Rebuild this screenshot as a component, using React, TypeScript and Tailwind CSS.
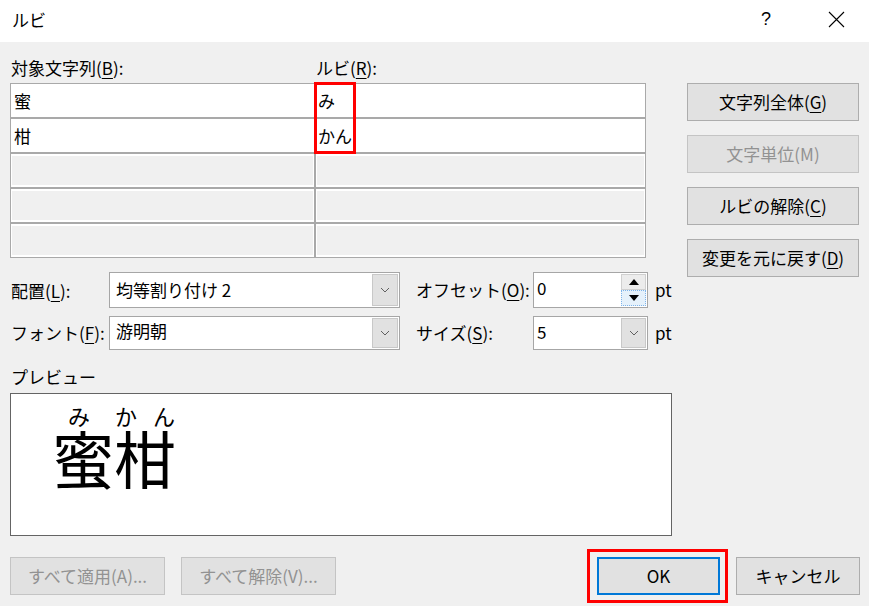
import type { ReactNode } from "react";

const font = "font-['Noto_Sans_CJK_JP','Noto_Sans',sans-serif]";

function U({ children }: { children: ReactNode }) {
  return <span className="underline underline-offset-[3px] decoration-1">{children}</span>;
}

function WinButton({ children, disabled, className = "" }: { children: ReactNode; disabled?: boolean; className?: string }) {
  return (
    <div
      className={`h-[38px] flex items-center justify-center border bg-[#e1e1e1] leading-[20px] ${
        disabled ? "border-[#c4c4c4] text-[#929292]" : "border-[#adadad] text-black"
      } ${className}`}
    >
      {children}
    </div>
  );
}

function Chevron() {
  return (
    <svg width="10" height="6" viewBox="0 0 10 6" className="text-[#606060]">
      <path d="M1 1 L5 5 L9 1" fill="none" stroke="currentColor" strokeWidth="1" />
    </svg>
  );
}

function Combo({ value, className = "", textClass = "" }: { value: string; className?: string; textClass?: string }) {
  return (
    <div className={`flex items-stretch bg-white border border-[#a6a6a6] p-px ${className}`}>
      <div className={`flex-1 pl-[5px] leading-[20px] ${textClass}`}>{value}</div>
      <div className="w-[26px] bg-[#e1e1e1] border border-[#c8c8c8] flex items-center justify-center">
        <Chevron />
      </div>
    </div>
  );
}

function Row({ base, ruby, filled, first }: { base?: string; ruby?: string; filled?: boolean; first?: boolean }) {
  const cell = filled
    ? "bg-white"
    : "bg-[#f0f0f0] shadow-[inset_0_2px_0_#fff,inset_0_-2px_0_#fff,inset_1px_0_0_#fff,inset_-1px_0_0_#fff]";
  return (
    <div className={`flex ${first ? "h-[33px]" : "h-[35px] border-t-2 border-[#a9a9a9]"}`}>
      <div className={`w-[305px] border-r-2 border-[#a9a9a9] pl-[3px] flex items-center leading-[20px] ${cell}`}>{base}</div>
      <div className={`flex-1 pl-[2px] flex items-center leading-[20px] ${cell}`}>{ruby}</div>
    </div>
  );
}

export default function App() {
  return (
    <div className={`w-[869px] h-[606px] overflow-hidden bg-[#f0f0f0] text-[17px] text-black ${font}`}>
      {/* title bar */}
      <div className="h-[42px] bg-white flex items-center pl-[12px]">
        <span className="leading-[20px] -mt-[3px]">ルビ</span>
        <span className="ml-auto mr-[57px] -mt-[4px] font-['Liberation_Sans',sans-serif] text-[18px] leading-[20px]">?</span>
        <svg width="17" height="17" viewBox="0 0 17 17" className="mr-[24px] -mt-[3px]">
          <path d="M1 1 L16 16 M16 1 L1 16" stroke="#000" strokeWidth="1.1" fill="none" />
        </svg>
      </div>

      <div className="flex pl-[10px] pt-[16px]">
        {/* left block */}
        <div className="w-[662px]">
          <div className="flex h-[20px] mb-[5px] leading-[20px]">
            <div className="w-[305px] pl-px">
              対象文字列(<U>B</U>):
            </div>
            <div className="pl-px">
              ルビ(<U>R</U>):
            </div>
          </div>

          <div className="relative w-[636px] border border-[#a9a9a9]">
            <Row base="蜜" ruby="み" filled first />
            <Row base="柑" ruby="かん" filled />
            <Row />
            <Row />
            <Row />
            <div className="absolute left-[303px] -top-[2px] w-[42px] h-[72px] border-[3px] border-[#ff0000]" />
          </div>

          <div className="flex items-center mt-[14px] h-[36px]">
            <div className="w-[99px] pl-px leading-[20px] mt-[2px]">
              配置(<U>L</U>):
            </div>
            <Combo value="均等割り付け 2" className="w-[291px] h-[36px]" textClass="pt-[6px]" />
            <div className="ml-[16px] w-[117px] leading-[20px]">
              オフセット(<U>O</U>):
            </div>
            <div className="w-[115px] h-[36px] flex items-stretch bg-white border border-[#a6a6a6] p-px">
              <div className="flex-1 pl-[2px] pt-[4px] leading-[20px]">0</div>
              <div className="w-[25px] flex flex-col">
                <div className="flex-1 bg-[#ececec] border border-[#d0d0d0] flex items-center justify-center">
                  <svg width="10" height="6" viewBox="0 0 10 6">
                    <path d="M0 6 L5 0 L10 6 Z" fill="#000" />
                  </svg>
                </div>
                <div className="flex-1 bg-[#e5f1fb] border border-dotted border-[#7eb4ea] flex items-center justify-center">
                  <svg width="10" height="6" viewBox="0 0 10 6">
                    <path d="M0 0 L10 0 L5 6 Z" fill="#000" />
                  </svg>
                </div>
              </div>
            </div>
            <div className="ml-[7px] leading-[20px]">pt</div>
          </div>

          <div className="flex items-center mt-[8px] h-[34px]">
            <div className="w-[99px] pl-px leading-[20px]">
              フォント(<U>F</U>):
            </div>
            <Combo value="游明朝" className="w-[291px] h-[34px]" textClass="pt-[3px]" />
            <div className="ml-[16px] w-[117px] leading-[20px]">
              サイズ(<U>S</U>):
            </div>
            <div className="w-[115px] h-[34px] flex items-stretch bg-white border border-[#a6a6a6] p-px">
              <div className="flex-1 pl-[2px] pt-[4px] leading-[20px]">5</div>
              <div className="w-[25px] bg-[#e1e1e1] border border-[#c8c8c8] flex items-center justify-center">
                <Chevron />
              </div>
            </div>
            <div className="ml-[7px] leading-[20px]">pt</div>
          </div>

          <div className="mt-[17px] h-[20px] leading-[20px] pl-px">プレビュー</div>

          <div className="mt-[6px] h-[143px] bg-white border border-[#646464] pl-[41px] pt-[10px]">
            <div className="flex">
              <div className="w-[62px] flex flex-col">
                <div className="h-[22px] text-[22px] leading-none flex justify-center pr-[8px]">み</div>
                <div className="text-[62px] leading-none">蜜</div>
              </div>
              <div className="w-[62px] flex flex-col">
                <div className="h-[22px] text-[22px] leading-none flex justify-between px-[1px]">
                  <span>か</span>
                  <span>ん</span>
                </div>
                <div className="text-[62px] leading-none">柑</div>
              </div>
            </div>
          </div>
        </div>

        {/* right buttons */}
        <div className="ml-[15px] w-[172px] pt-[25px] flex flex-col gap-[14px]">
          <WinButton>
            文字列全体(<U>G</U>)
          </WinButton>
          <WinButton disabled>文字単位(M)</WinButton>
          <WinButton>
            ルビの解除(<U>C</U>)
          </WinButton>
          <WinButton>
            変更を元に戻す(<U>D</U>)
          </WinButton>
        </div>
      </div>

      {/* bottom buttons */}
      <div className="flex items-center mt-[21px] pl-[10px] pr-[9px]">
        <WinButton disabled className="w-[155px]">
          すべて適用(A)...
        </WinButton>
        <WinButton disabled className="w-[155px] ml-[16px]">
          すべて解除(V)...
        </WinButton>
        <div className="relative ml-auto">
          <div className="w-[123px] h-[38px] flex items-center justify-center bg-[#e1e1e1] border-2 border-[#0078d7] leading-[20px]">
            OK
          </div>
          <div className="absolute -left-[10px] -top-[8px] w-[141px] h-[54px] border-[3px] border-[#ff0000]" />
        </div>
        <WinButton className="w-[124px] ml-[16px]">キャンセル</WinButton>
      </div>
    </div>
  );
}
